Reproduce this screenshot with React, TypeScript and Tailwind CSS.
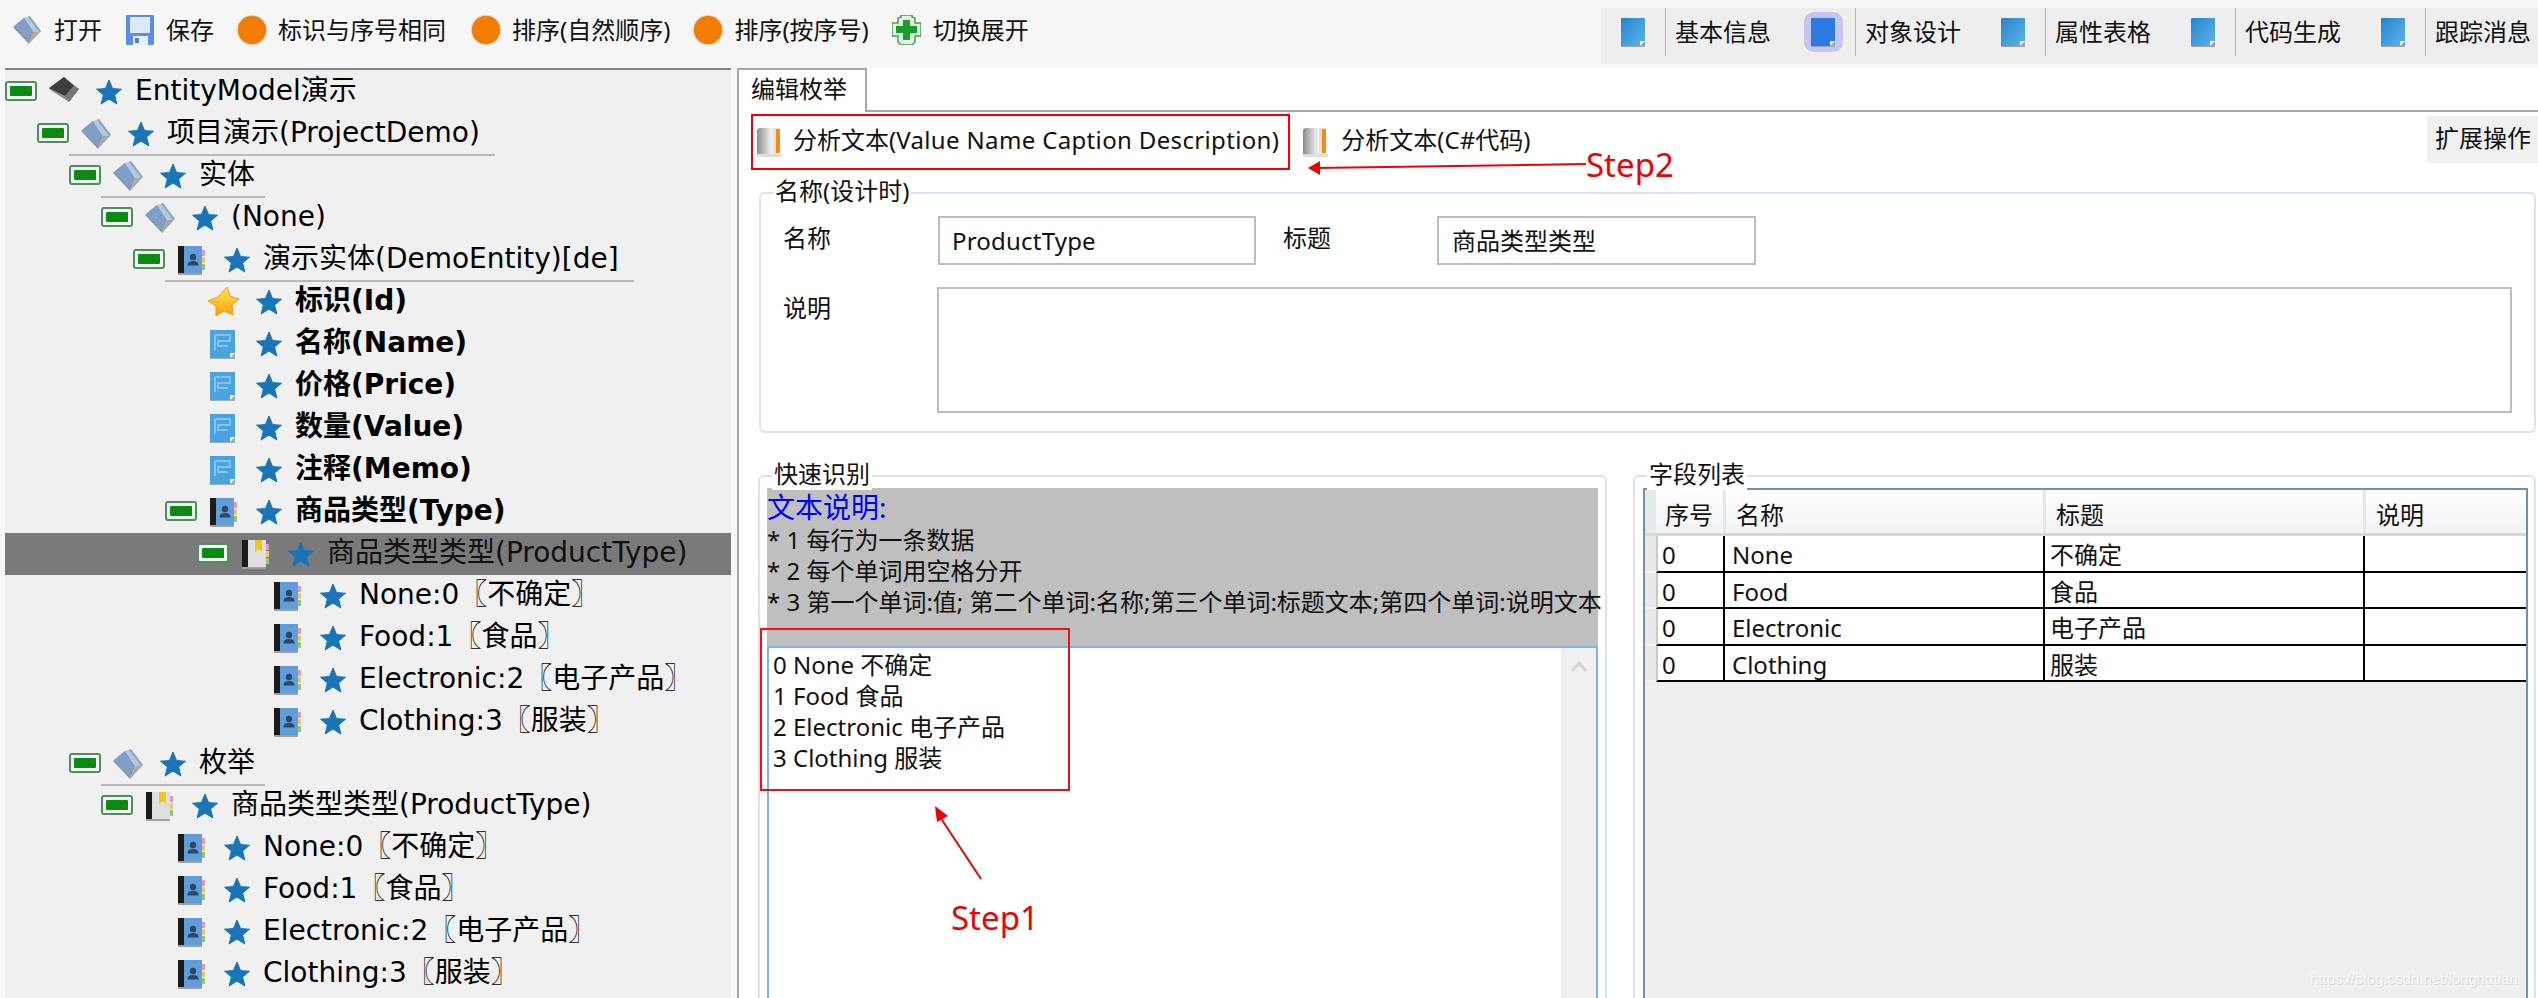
import React from 'react';

const Star = () => (
    <svg width="28" height="28" viewBox="0 0 28 28" className="shrink-0">
        <polygon points="14,2 17.6,10.6 26.5,11.2 19.6,17 21.9,26 14,21.1 6.1,26 8.4,17 1.5,11.2 10.4,10.6" fill="#1a74b8" stroke="#1a74b8" strokeLinejoin="round" />
    </svg>
);

const Expander = () => (
    <svg width="32" height="20" viewBox="0 0 32 20" className="block">
        <rect x="1" y="1" width="30" height="18" rx="2" fill="#f4f8f4" stroke="#4d9158" strokeWidth="2" />
        <rect x="5" y="5" width="22" height="10" rx="1" fill="#0c8a12" />
    </svg>
);

const FolderBook = ({ size = 32 }: { size?: number }) => (
    <svg width={size} height={size} viewBox="0 0 32 32">
        <polygon points="1,13 13,3 23,18 18,31" fill="#8f97a3" />
        <polygon points="2,12 13,3 22,16 17,27" fill="#7f9fca" />
        <polygon points="13,3 19,1 31,17 23,18" fill="#b4c8e0" />
        <polygon points="19,1 31,17 29,18 17,2" fill="#8ea7c6" />
        <polygon points="23,18 31,17 18,31" fill="#a8a8a8" />
    </svg>
);

const DarkBook = () => (
    <svg width="32" height="32" viewBox="0 0 32 32">
        <polygon points="1,13 16,1 31,13 21,26" fill="#8d8d8d" />
        <polygon points="1,12 16,1 26,10 17,20" fill="#3d3d3d" />
        <polygon points="17,20 26,10 31,13 21,26" fill="#777777" />
    </svg>
);

const ContactBook = ({ mark }: { mark?: boolean }) => (
    <svg width="30" height="31" viewBox="0 0 30 31">
        <rect x="2" y="2" width="24" height="28" rx="1" fill="#a0a0a0" />
        <rect x="2" y="1" width="8" height="27" fill="#1c1c1c" />
        <rect x="8" y="1" width="18" height="27" fill={mark ? '#dfdfdf' : '#5f9edb'} />
        {mark ? (
            <polygon points="15,1 22,1 22,13 18.5,10 15,13" fill="#f5c518" />
        ) : (
            <>
                <circle cx="17" cy="12" r="3.2" fill="#2d4866" />
                <path d="M11.5 20.5c0-3.5 2.5-4.5 5.500-4.500s5.500 1 5.500 4.500z" fill="#2d4866" />
            </>
        )}
        <rect x="26" y="5" width="3" height="6" fill="#e59ab0" />
        <rect x="26" y="12" width="3" height="6" fill="#e8c86a" />
        <rect x="26" y="19" width="3" height="6" fill="#93c47d" />
    </svg>
);

const GoldStar = () => (
    <svg width="32" height="32" viewBox="0 0 32 32">
        <defs>
            <linearGradient id="gold" x1="0" y1="0" x2="0" y2="1">
                <stop offset="0" stopColor="#ffe45c" />
                <stop offset="1" stopColor="#f59f0a" />
            </linearGradient>
        </defs>
        <polygon points="19,1 22,10 31,13 24,19 25,29 16,25 8,30 8,20 0,15 10,11" fill="url(#gold)" stroke="#e9a20e" strokeLinejoin="round" />
    </svg>
);

const Note = ({ dark }: { dark?: boolean }) => (
    <svg width="26" height="31" viewBox="0 0 26 31">
        <defs>
            <linearGradient id="note" x1="0" y1="0" x2="1" y2="1">
                <stop offset="0" stopColor="#2485cc" />
                <stop offset="1" stopColor="#5fb4e8" />
            </linearGradient>
        </defs>
        <rect x="1" y="2" width="24" height="28" rx="1" fill="#9aa3aa" />
        <path d="M1 2a1 1 0 0 1 1-1h22a1 1 0 0 1 1 1v22l-5 5H1z" fill={dark ? '#2b7ae0' : 'url(#note)'} />
        <path d="M25 24l-5 5v-5z" fill="#e6f2fa" />
    </svg>
);

const FieldNote = () => (
    <svg width="27" height="30" viewBox="0 0 27 30">
        <rect x="2" y="2" width="25" height="28" fill="#a4acb3" />
        <path d="M2 1h25v23l-5 5H2z" fill="#4aa3e0" />
        <path d="M27 24l-5 5v-5z" fill="#e6f2fa" />
        <path d="M7 6h15v6H10v5h10M7 6v15" fill="none" stroke="#86c3ec" strokeWidth="2" />
    </svg>
);

const Floppy = () => (
    <svg width="28" height="30" viewBox="0 0 28 30">
        <rect x="0" y="0" width="28" height="30" rx="1" fill="#5b8ee6" />
        <rect x="4" y="2" width="20" height="16" fill="#dfe8f6" />
        <rect x="7" y="21" width="15" height="9" fill="#e8eef9" />
        <rect x="9" y="23" width="4" height="5" fill="#4d7fd8" />
    </svg>
);

const Orange = () => <div className="w-[28px] h-[28px] rounded-full bg-[#f47c00] shadow-[0_0_2px_#a08050] shrink-0" />;

const GreenPlus = () => (
    <svg width="29" height="30" viewBox="0 0 29 30">
        <path d="M9 0h11v2l3 1v5h6v13h-6v6l-3 3H9l-3-3v-6H0V8h6V3l3-1z" fill="#dff0df" stroke="#4f9a5a" strokeWidth="1.5" />
        <path d="M11 5h7v6h7v7h-7v7h-7v-7H4v-7h7z" fill="#16a02a" />
    </svg>
);

const AnalyzeBook = () => (
    <svg width="28" height="32" viewBox="0 0 28 32">
        <defs>
            <linearGradient id="ana" x1="0" y1="0" x2="1" y2="0">
                <stop offset="0" stopColor="#8a8a8a" />
                <stop offset="0.7" stopColor="#dcdcdc" />
                <stop offset="1" stopColor="#f4f4f4" />
            </linearGradient>
        </defs>
        <rect x="2" y="28" width="25" height="3" fill="#dedede" />
        <path d="M2 5a3 3 0 0 1 3-3h13v26H2z" fill="url(#ana)" />
        <path d="M18 2h5a2 2 0 0 1 2 2v23l-7 1z" fill="#f6dcc0" />
        <path d="M21 3h4v24h-4z" fill="#f28c1e" />
    </svg>
);

type Row = {
    level: number;
    text: string;
    icon: 'dark' | 'folder' | 'contact' | 'mark' | 'gold' | 'note';
    open?: boolean;
    bold?: boolean;
    selected?: boolean;
    line?: [number, number];
};

const leaves = (level: number): Row[] => [
    { level, text: 'None:0〖不确定〗', icon: 'contact' },
    { level, text: 'Food:1〖食品〗', icon: 'contact' },
    { level, text: 'Electronic:2〖电子产品〗', icon: 'contact' },
    { level, text: 'Clothing:3〖服装〗', icon: 'contact' },
];

const rows: Row[] = [
    { level: 0, text: 'EntityModel演示', icon: 'dark', open: true },
    { level: 1, text: '项目演示(ProjectDemo)', icon: 'folder', open: true, line: [69, 426] },
    { level: 2, text: '实体', icon: 'folder', open: true, line: [101, 164] },
    { level: 3, text: '(None)', icon: 'folder', open: true },
    { level: 4, text: '演示实体(DemoEntity)[de]', icon: 'contact', open: true, line: [165, 469] },
    { level: 5, text: '标识(Id)', icon: 'gold', bold: true },
    { level: 5, text: '名称(Name)', icon: 'note', bold: true },
    { level: 5, text: '价格(Price)', icon: 'note', bold: true },
    { level: 5, text: '数量(Value)', icon: 'note', bold: true },
    { level: 5, text: '注释(Memo)', icon: 'note', bold: true },
    { level: 5, text: '商品类型(Type)', icon: 'contact', bold: true, open: true },
    { level: 6, text: '商品类型类型(ProductType)', icon: 'mark', open: true, selected: true },
    ...leaves(7),
    { level: 2, text: '枚举', icon: 'folder', open: true, line: [101, 164] },
    { level: 3, text: '商品类型类型(ProductType)', icon: 'mark', open: true },
    ...leaves(4),
];

const RowIcon = ({ icon }: { icon: Row['icon'] }) => {
    if (icon === 'dark') return <DarkBook />;
    if (icon === 'folder') return <FolderBook />;
    if (icon === 'contact') return <ContactBook />;
    if (icon === 'mark') return <ContactBook mark />;
    if (icon === 'gold') return <GoldStar />;
    return <FieldNote />;
};

const TreeRow = ({ row }: { row: Row }) => (
    <div className={`relative h-[42px] flex items-center ${row.selected ? 'bg-[#7a7a7a] text-[#111]' : 'text-black'}`}>
        <div className="flex items-center h-full" style={{ paddingLeft: row.level * 32 }}>
            <div className="w-[43px] pb-[3px] shrink-0">{row.open && <Expander />}</div>
            <div className="w-[47px] flex shrink-0"><RowIcon icon={row.icon} /></div>
            <div className="w-[40px] flex shrink-0"><Star /></div>
            <span className={`whitespace-pre leading-[42px] pb-[3px] ${row.bold ? 'font-bold' : ''}`}>{row.text}</span>
        </div>
        {row.line && <div className="absolute bottom-[-1px] h-[2px] bg-[#b9b9b9]" style={{ left: row.line[0] - 5, width: row.line[1] }} />}
    </div>
);

const toolItems = [
    { icon: <FolderBook size={30} />, label: '打开', gap: 'mr-[24px]' },
    { icon: <Floppy />, label: '保存', gap: 'mr-[24px]' },
    { icon: <Orange />, label: '标识与序号相同', gap: 'mr-[26px]' },
    { icon: <Orange />, label: '排序(自然顺序)', gap: 'mr-[24px]' },
    { icon: <Orange />, label: '排序(按序号)', gap: 'mr-[23px]' },
    { icon: <GreenPlus />, label: '切换展开', gap: '' },
];

const navItems = ['基本信息', '对象设计', '属性表格', '代码生成', '跟踪消息'];

const GroupBox = ({ title, className, children }: { title: string; className: string; children: React.ReactNode }) => (
    <div className={`relative border-2 border-[#d9e3e9] rounded-[6px] ${className}`}>
        <span className="absolute left-[12px] top-[-19px] bg-white px-[2px] leading-[32px]">{title}</span>
        {children}
    </div>
);

const gridRows = [
    ['0', 'None', '不确定'],
    ['0', 'Food', '食品'],
    ['0', 'Electronic', '电子产品'],
    ['0', 'Clothing', '服装'],
];

export default function App() {
    return (
        <div className="relative w-[2538px] h-[998px] overflow-hidden bg-white text-[24px] text-[#111] font-['Noto_Sans','Noto_Sans_CJK_SC',sans-serif]">
            {/* toolbar */}
            <div className="h-[68px] bg-[#f6f6f6] flex items-start">
                <div className="flex items-center h-[60px] pl-[12px]">
                    {toolItems.map((t, i) => (
                        <div key={i} className={`flex items-center gap-[12px] ${t.gap}`}>
                            {t.icon}
                            <span className="whitespace-pre">{t.label}</span>
                        </div>
                    ))}
                </div>
                <div className="ml-auto mt-[8px] h-[56px] w-[937px] bg-[#eeeeee] flex items-start">
                    {navItems.map((label, i) => (
                        <div key={label} className="flex items-start w-[190px] h-[48px] shrink-0">
                            <div className="w-[64px] h-full flex items-center justify-center">
                                {i === 1 ? (
                                    <div className="w-[39px] h-[40px] rounded-[10px] bg-[#c3c6f3] flex items-center justify-center"><Note dark /></div>
                                ) : (
                                    <Note />
                                )}
                            </div>
                            <div className="w-px h-full bg-[#b5b5b5]" />
                            <span className="pl-[9px] leading-[48px] whitespace-pre">{label}</span>
                        </div>
                    ))}
                </div>
            </div>

            <div className="flex h-[930px]">
                {/* tree */}
                <div className="w-[737px] shrink-0 bg-[#f7f7f7] pl-[5px] pr-[6px]">
                    <div className="h-full bg-[#f0f0f0] border-t-[2px] border-[#7f828c] font-['DejaVu_Sans','Noto_Sans_CJK_SC',sans-serif] text-[28px] pt-px">
                        {rows.map((row, i) => <TreeRow key={i} row={row} />)}
                    </div>
                </div>

                {/* editor */}
                <div className="flex-1 min-w-0 border-l-2 border-[#a8a8a8] relative">
                    <div className="flex h-[44px]">
                        <div className="w-[128px] border-t-2 border-r-2 border-[#a8a8a8] pl-[12px] leading-[38px]">编辑枚举</div>
                        <div className="flex-1 border-b-2 border-[#a8a8a8]" />
                    </div>

                    <div className="flex items-start h-[80px] pl-[16px]">
                        <div className="flex items-center h-[56px] gap-[10px] mt-[2px]">
                            <AnalyzeBook />
                            <span className="whitespace-pre pb-[4px]">分析文本(<span className="tracking-[0.35px]">Value Name Caption Description)</span></span>
                        </div>
                        <div className="flex items-center h-[56px] gap-[12px] ml-[22px] mt-[2px]">
                            <AnalyzeBook />
                            <span className="whitespace-pre pb-[4px]">分析文本(C#代码)</span>
                        </div>
                        <div className="ml-auto mt-[4px] w-[111px] h-[47px] bg-[#f0f0f0] pl-[8px] leading-[44px] whitespace-pre">扩展操作</div>
                    </div>

                    <GroupBox title="名称(设计时)" className="ml-[20px] mr-[2px] h-[241px] px-[22px] pt-[22px]">
                        <div className="flex items-start">
                            <span className="w-[155px] pt-[6px] leading-[32px]">名称</span>
                            <div className="w-[318px] h-[49px] border-2 border-[#bdbdbd] pl-[12px] leading-[46px] tracking-[0.2px]">ProductType</div>
                            <span className="w-[181px] pl-[27px] pt-[6px] leading-[32px]">标题</span>
                            <div className="w-[319px] h-[49px] border-2 border-[#bdbdbd] pl-[13px] leading-[46px]">商品类型类型</div>
                        </div>
                        <div className="flex items-start mt-[22px]">
                            <span className="w-[155px] pt-[5px] leading-[32px]">说明</span>
                            <div className="w-[1587px] h-[126px] border-2 border-[#bdbdbd]" />
                        </div>
                    </GroupBox>

                    <div className="flex mt-[42px] ml-[19px] mr-[2px] h-[540px]">
                        <GroupBox title="快速识别" className="w-[849px] px-[7px] pt-[11px] border-b-0">
                            <div className="h-[158px] bg-[#bfbfbf] pt-[2px] text-[#111] whitespace-pre">
                                <div className="h-[34px] text-[28px] leading-[34px] text-[#0000ff]">文本说明:</div>
                                <div className="leading-[31px]">* 1 每行为一条数据</div>
                                <div className="leading-[31px]">* 2 每个单词用空格分开</div>
                                <div className="leading-[31px]">* 3 第一个单词:值; 第二个单词:名称;第三个单词:标题文本;第四个单词:说明文本</div>
                            </div>
                            <div className="h-[400px] border-2 border-[#7eb4ea] flex">
                                <div className="flex-1 pl-[4px] pt-[1px] leading-[31px] whitespace-pre">
                                    <div>0 None 不确定</div>
                                    <div>1 Food 食品</div>
                                    <div>2 Electronic 电子产品</div>
                                    <div>3 Clothing 服装</div>
                                </div>
                                <div className="w-[35px] bg-[#f0f0f0] flex justify-center pt-[12px]">
                                    <svg width="18" height="12" viewBox="0 0 18 12"><path d="M2 11L9 3l7 8" fill="none" stroke="#d4d4d4" strokeWidth="3" /></svg>
                                </div>
                            </div>
                        </GroupBox>

                        <GroupBox title="字段列表" className="ml-[26px] flex-1 pl-[8px] pr-[6px] pt-[11px] border-b-0">
                            <div className="h-[520px] border-2 border-[#6f8fb5] border-b-0 bg-[#efefef]">
                                <div className="grid grid-cols-[11px_67px_320px_320px_1fr] h-[46px] bg-linear-to-b from-white to-[#f1f2f4] border-b-[3px] border-[#d8d8d8]">
                                    <div className="bg-[#e6eaea]" />
                                    {['序号', '名称', '标题', '说明'].map((h, i) => (
                                        <div key={h} className={`pt-[7px] leading-[36px] ${i === 0 ? 'pl-[9px]' : 'pl-[10px] border-l-[3px] border-[#e6e6e6]'}`}>{h}</div>
                                    ))}
                                </div>
                                {gridRows.map((r) => (
                                    <div key={r[1]} className="grid grid-cols-[11px_67px_320px_320px_1fr] h-[36.5px]">
                                        <div className="bg-[#e9e9e9] border-b-2 border-[#f6f6f6]" />
                                        <div className="bg-white border-l-2 border-l-[#c9c9c9] border-b-2 border-b-black pl-[4px] pt-[3px] leading-[31px]">{r[0]}</div>
                                        <div className="bg-white border-l-2 border-l-black border-b-2 border-b-black pl-[7px] pt-[3px] leading-[31px]">{r[1]}</div>
                                        <div className="bg-white border-l-2 border-l-black border-b-2 border-b-black pl-[5px] pt-[3px] leading-[31px]">{r[2]}</div>
                                        <div className="bg-white border-l-2 border-l-black border-b-2 border-b-black" />
                                    </div>
                                ))}
                            </div>
                        </GroupBox>
                    </div>
                </div>
            </div>

            {/* annotations drawn over the screenshot */}
            <div className="absolute left-[751px] top-[114px] w-[539px] h-[56px] border-2 border-[#f00000]" />
            <div className="absolute left-[760px] top-[628px] w-[310px] h-[163px] border-2 border-[#f01010]" />
            <svg className="absolute left-0 top-0 pointer-events-none" width="2538" height="998" viewBox="0 0 2538 998">
                <line x1="1316" y1="168" x2="1586" y2="164" stroke="#f00000" strokeWidth="2" />
                <polygon points="1308,168 1320,161 1320,175" fill="#f00000" />
                <line x1="981" y1="879" x2="940" y2="817" stroke="#f00000" strokeWidth="2" />
                <polygon points="935,806 948,816 937,822" fill="#f00000" />
            </svg>
            <span className="absolute left-[1586px] top-[145px] text-[33px] leading-[40px] text-[#f00000]">Step2</span>
            <span className="absolute left-[951px] top-[898px] text-[33px] leading-[40px] text-[#f00000]">Step1</span>
            <span className="absolute left-[2310px] top-[970px] text-[15px] leading-[18px] text-[#f7f7f7] [text-shadow:1px_1px_1px_#d4d4d4] whitespace-pre font-['Liberation_Sans',sans-serif]">https://blog.csdn.net/longhutian</span>
        </div>
    );
}
